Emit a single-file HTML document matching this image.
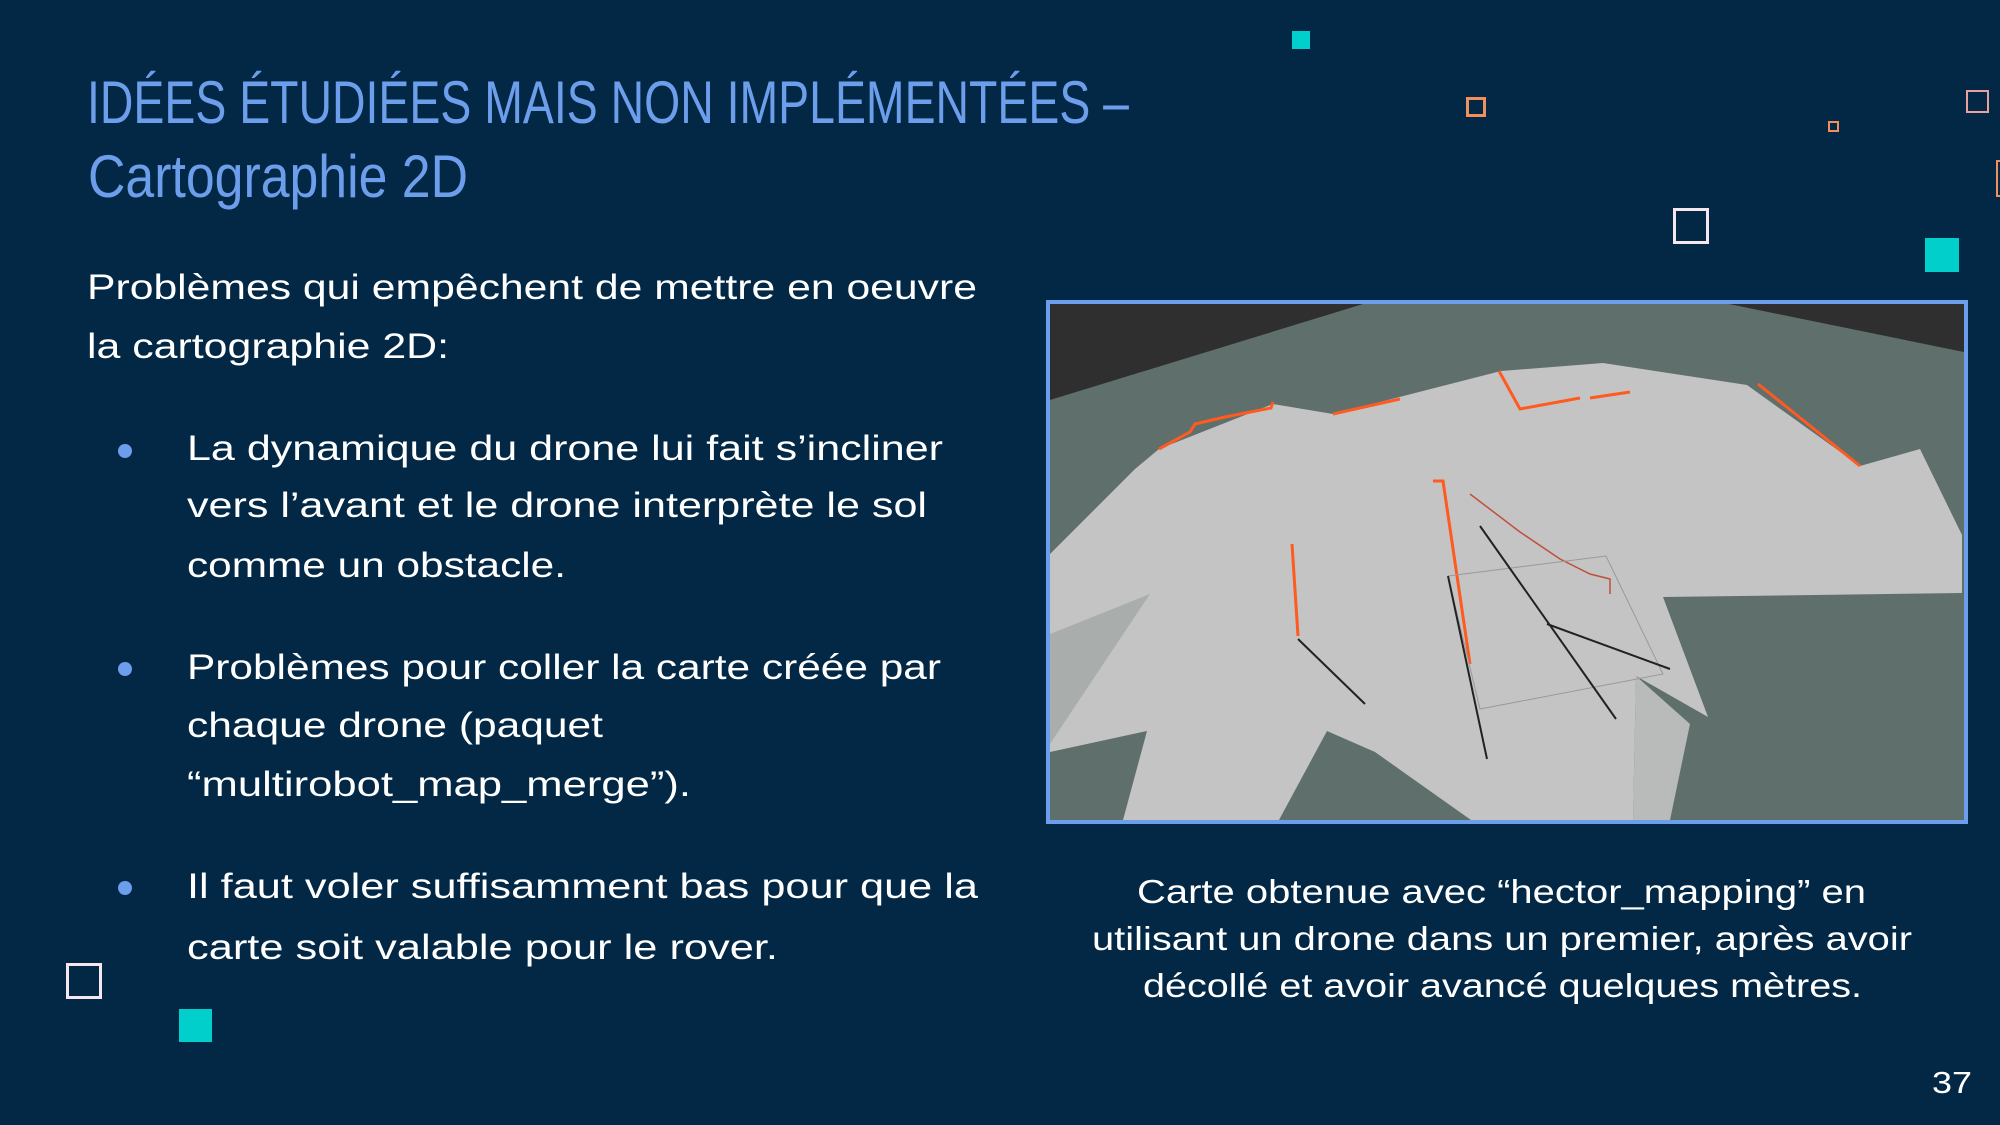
<!DOCTYPE html>
<html><head><meta charset="utf-8"><style>
html,body{margin:0;padding:0;background:#012744;}
svg{display:block}
</style></head><body>
<svg width="2000" height="1125" viewBox="0 0 2000 1125" xmlns="http://www.w3.org/2000/svg">
<rect width="2000" height="1125" fill="#022845"/>
<g font-family="Liberation Sans, sans-serif" fill="#6d9eeb" font-size="60">
<text x="87" y="123" textLength="1042" lengthAdjust="spacingAndGlyphs">IDÉES ÉTUDIÉES MAIS NON IMPLÉMENTÉES –</text>
<text x="88" y="197" textLength="380" lengthAdjust="spacingAndGlyphs">Cartographie 2D</text>
</g>
<g font-family="Liberation Sans, sans-serif" fill="#ffffff" font-size="35">
<text x="87" y="299" textLength="890" lengthAdjust="spacingAndGlyphs">Problèmes qui empêchent de mettre en oeuvre</text>
<text x="87" y="358" textLength="362" lengthAdjust="spacingAndGlyphs">la cartographie 2D:</text>
<text x="187" y="460" textLength="756" lengthAdjust="spacingAndGlyphs">La dynamique du drone lui fait s’incliner</text>
<text x="187" y="517" textLength="740" lengthAdjust="spacingAndGlyphs">vers l’avant et le drone interprète le sol</text>
<text x="187" y="577" textLength="379" lengthAdjust="spacingAndGlyphs">comme un obstacle.</text>
<text x="187" y="679" textLength="754" lengthAdjust="spacingAndGlyphs">Problèmes pour coller la carte créée par</text>
<text x="187" y="737" textLength="416" lengthAdjust="spacingAndGlyphs">chaque drone (paquet</text>
<text x="187" y="796" textLength="504" lengthAdjust="spacingAndGlyphs">“multirobot_map_merge”).</text>
<text x="187" y="898" textLength="791" lengthAdjust="spacingAndGlyphs">Il faut voler suffisamment bas pour que la</text>
<text x="187" y="959" textLength="591" lengthAdjust="spacingAndGlyphs">carte soit valable pour le rover.</text>
</g>
<g fill="#6d9eeb">
<circle cx="125" cy="451" r="7"/><circle cx="125" cy="669" r="7"/><circle cx="125" cy="888" r="7"/>
</g>
<g font-family="Liberation Sans, sans-serif" fill="#ffffff" font-size="33">
<text x="1137" y="903" textLength="729" lengthAdjust="spacingAndGlyphs">Carte obtenue avec “hector_mapping” en</text>
<text x="1092" y="950" textLength="820" lengthAdjust="spacingAndGlyphs">utilisant un drone dans un premier, après avoir</text>
<text x="1143" y="997" textLength="719" lengthAdjust="spacingAndGlyphs">décollé et avoir avancé quelques mètres.</text>
<text x="1932" y="1093" font-size="31" textLength="40" lengthAdjust="spacingAndGlyphs">37</text>
</g>
<!-- decorations -->
<rect x="1292" y="31" width="18" height="18" fill="#00cfcc"/>
<rect x="1467.5" y="98.5" width="17" height="17" fill="none" stroke="#f0905f" stroke-width="3"/>
<rect x="1829" y="122" width="9" height="9" fill="none" stroke="#f0905f" stroke-width="2"/>
<rect x="1967" y="91" width="21" height="21" fill="none" stroke="#e8a0a0" stroke-width="2"/>
<rect x="1997" y="161" width="10" height="35" fill="none" stroke="#f0905f" stroke-width="2"/>
<rect x="1674.5" y="209.5" width="33" height="33" fill="none" stroke="#f6e6ee" stroke-width="3"/>
<rect x="1925" y="238" width="34" height="34" fill="#00cfcc"/>
<rect x="67.5" y="964.5" width="33" height="33" fill="none" stroke="#f6e6ee" stroke-width="3"/>
<rect x="179" y="1009" width="33" height="33" fill="#00cfcc"/>
<!-- map image -->
<rect x="1046" y="300" width="922" height="524" fill="#6d9eeb"/>
<svg x="1050" y="304" width="914" height="516" viewBox="0 0 914 516">
<rect width="914" height="516" fill="#5f6f6c"/>
<polygon points="0,0 313,0 0,96" fill="#2f2f2f"/>
<polygon points="679,0 914,0 914,48" fill="#2f2f2f"/>
<polygon points="0,250 85,165 109,145 223,100 283,110 451,67 553,59 697,81 810,162 870,145 912,231 912,289 613,293 658,413 586,372 583,516 421,516 325,448 277,427 229,516 73,516 97,427 0,448" fill="#c4c4c4"/>
<polygon points="0,330 100,290 0,440" fill="#a9aeac"/>
<polygon points="586,372 640,420 620,516 583,516" fill="#b8bbba"/>
<g fill="none" stroke="#ff5a1f" stroke-width="3">
<polyline points="109,145 140,128 145,120 175,113 221,104 223,98"/>
<polyline points="283,110 350,95"/>
<polyline points="449,67 470,105 530,94"/>
<polyline points="540,94 580,88"/>
<polyline points="708,80 810,162"/>
<polyline points="242,240 248,332"/>
<polyline points="383,177 393,177 420,360"/>
</g>
<polyline points="420,190 470,228 510,255 540,270 560,275 560,290" fill="none" stroke="#c0503a" stroke-width="1.5"/>
<g stroke="#999" stroke-width="1" fill="none">
<polygon points="398,272 556,252 613,370 430,405"/>
</g>
<g stroke="#222" stroke-width="2" fill="none">
<line x1="430" y1="222" x2="566" y2="415"/>
<line x1="497" y1="320" x2="620" y2="365"/>
<line x1="248" y1="335" x2="315" y2="400"/>
<line x1="398" y1="272" x2="437" y2="455"/>
</g>
</svg>
</svg>
</body></html>
